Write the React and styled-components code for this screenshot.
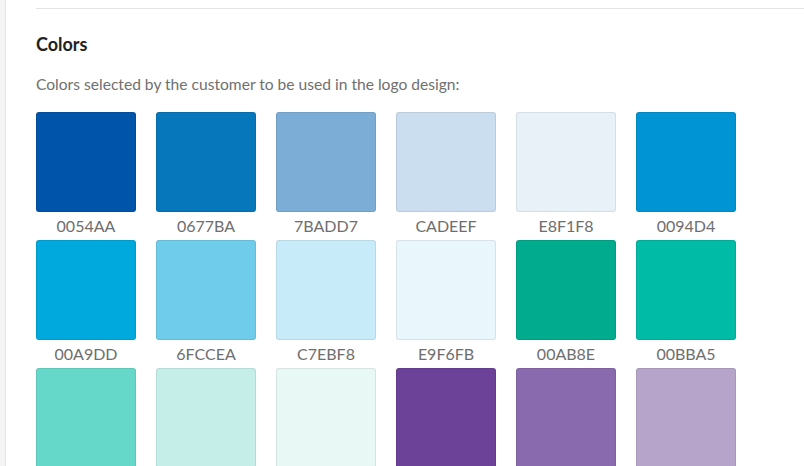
import React from 'react';
import styled, { createGlobalStyle } from 'styled-components';

const GlobalStyle = createGlobalStyle`
	html, body {
		margin: 0;
		padding: 0;
		background: #fff;
		font-family: Lato, "Open Sans", sans-serif;
	}
`;

const Page = styled.div`
	display: flex;
	height: 466px;
	overflow: hidden;
`;

const Sidebar = styled.div`
	width: 5px;
	flex-shrink: 0;
	background: #f4f4f4;
	border-right: 1px solid #e6e6e6;
`;

const Main = styled.div`
	flex: 1;
	padding: 8px 0 0 30px;
	overflow: hidden;
`;

const Divider = styled.div`
	height: 1px;
	background: #e4e4e4;
`;

const Title = styled.h3`
	margin: 24px 0 0;
	font-size: 18px;
	line-height: 22px;
	font-weight: 700;
	color: #222;
`;

const Subtitle = styled.p`
	margin: 19px 0 0;
	font-size: 15.6px;
	line-height: 20px;
	color: #707070;
`;

const Grid = styled.div`
	display: grid;
	grid-template-columns: repeat(6, 100px);
	column-gap: 20px;
	margin-top: 18px;
`;

const Item = styled.div`
	display: flex;
	flex-direction: column;
`;

const Swatch = styled.div`
	width: 100px;
	height: 100px;
	box-sizing: border-box;
	border-radius: 3px;
	border: 1px solid rgba(0, 0, 0, 0.08);
	background: ${(props) => props.color};
`;

const Label = styled.div`
	height: 28px;
	line-height: 28px;
	text-align: center;
	font-size: 16px;
	color: #6e6e6e;
`;

const colors = [
	['0054AA', '#0054AA'],
	['0677BA', '#0677BA'],
	['7BADD7', '#7BADD7'],
	['CADEEF', '#CADEEF'],
	['E8F1F8', '#E8F1F8'],
	['0094D4', '#0094D4'],
	['00A9DD', '#00A9DD'],
	['6FCCEA', '#6FCCEA'],
	['C7EBF8', '#C7EBF8'],
	['E9F6FB', '#E9F6FB'],
	['00AB8E', '#00AB8E'],
	['00BBA5', '#00BBA5'],
	['66D8CA', '#66D8CA'],
	['C5EEE9', '#C5EEE9'],
	['E8F8F5', '#E8F8F5'],
	['6C4299', '#6C4299'],
	['8A6AAE', '#8A6AAE'],
	['B6A4CB', '#B6A4CB'],
];

const App = () => (
	<>
		<GlobalStyle />
		<Page>
			<Sidebar />
			<Main>
				<Divider />
				<Title>Colors</Title>
				<Subtitle>Colors selected by the customer to be used in the logo design:</Subtitle>
				<Grid>
					{colors.map(([name, hex]) => (
						<Item key={name}>
							<Swatch color={hex} />
							<Label>{name}</Label>
						</Item>
					))}
				</Grid>
			</Main>
		</Page>
	</>
);

export default App;
